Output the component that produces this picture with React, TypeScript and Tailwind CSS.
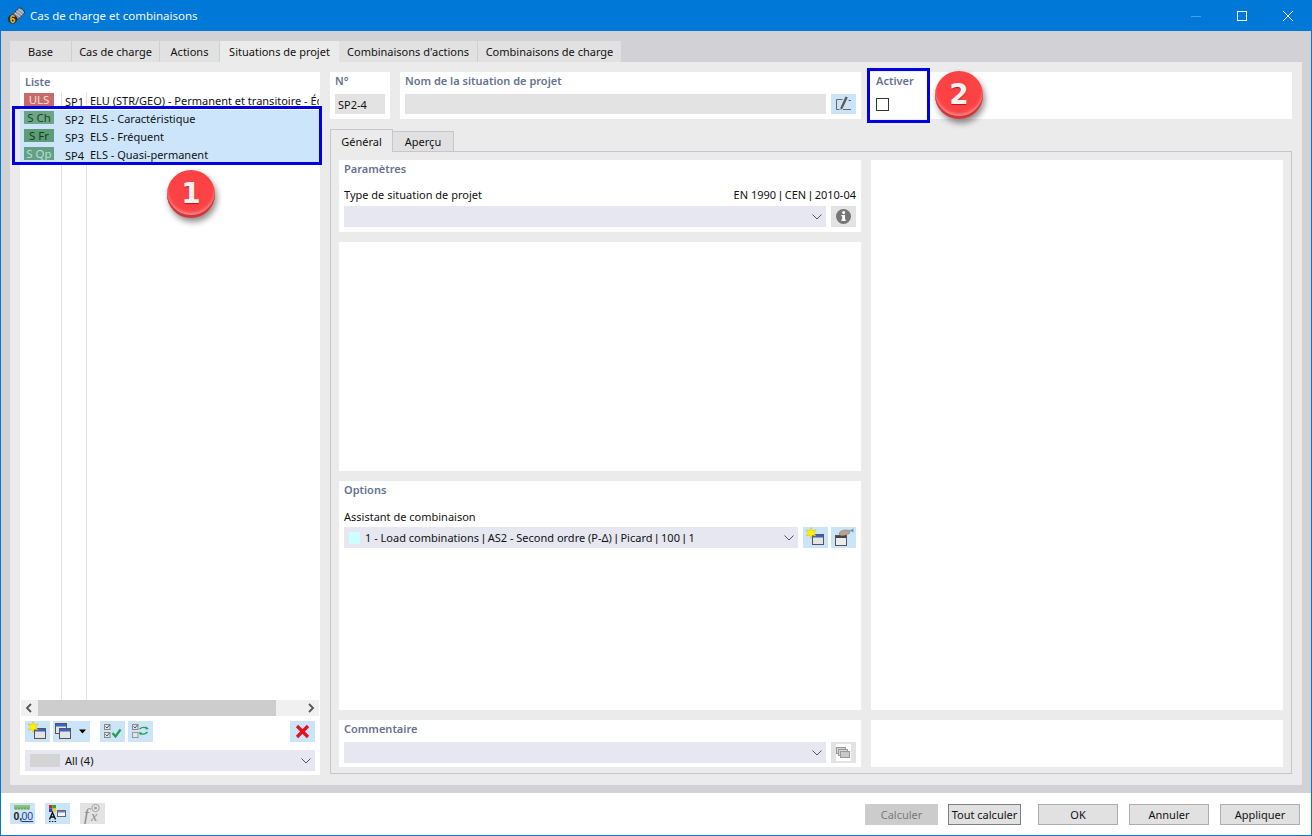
import React from "react";

const FONT = { fontFamily: '"Noto Sans", "Open Sans", sans-serif' };

function Pipe() {
  return <span className="font-['Liberation_Sans']">|</span>;
}

function Chevron() {
  return (
    <svg width="10" height="6" viewBox="0 0 10 6" className="shrink-0">
      <path d="M0.5 0.5 L5 5 L9.5 0.5" fill="none" stroke="#555" strokeWidth="1" />
    </svg>
  );
}

function Combo({ className, children }: { className: string; children?: React.ReactNode }) {
  return (
    <div className={"flex h-[21px] items-center bg-[#e6e7f0] pr-[4px] " + className}>
      <div className="flex min-w-0 flex-1 items-center">{children}</div>
      <Chevron />
    </div>
  );
}

function Btn({ children, gray, w = "w-[25px]" }: { children: React.ReactNode; gray?: boolean; w?: string }) {
  return (
    <div className={"flex h-[21px] shrink-0 items-center justify-center " + w + " " + (gray ? "bg-[#e3e3e3]" : "bg-[#cce4f7]")}>
      {children}
    </div>
  );
}

function NewWinIcon() {
  return (
    <svg width="25" height="21" viewBox="0 0 25 21">
      <rect x="9.5" y="7.5" width="11" height="10" fill="#e4e4e4" stroke="#555" />
      <rect x="10" y="8" width="10" height="2.5" fill="#3a5fd0" />
      <path d="M8 0.5 L9.3 3.8 L13 3 L10.8 6 L13 9 L9.3 8.2 L8 11.5 L6.7 8.2 L3 9 L5.2 6 L3 3 L6.7 3.8 Z" fill="#fff200" stroke="#c8b400" strokeWidth="0.4" />
    </svg>
  );
}

function DoubleWinIcon() {
  return (
    <svg width="37" height="21" viewBox="0 0 37 21">
      <rect x="2.5" y="2.5" width="11" height="10" fill="#e4e4e4" stroke="#555" />
      <rect x="3" y="3" width="10" height="2.5" fill="#3a5fd0" />
      <rect x="6.5" y="7.5" width="11" height="10" fill="#e4e4e4" stroke="#555" />
      <rect x="7" y="8" width="10" height="2.5" fill="#3a5fd0" />
      <path d="M26 8.5 H33 L29.5 12.5 Z" fill="#000" />
    </svg>
  );
}

function CheckAllIcon() {
  return (
    <svg width="25" height="21" viewBox="0 0 25 21">
      <rect x="4.5" y="3.5" width="5.5" height="5" fill="#e2e2e2" stroke="#8a8a8a" />
      <rect x="4.5" y="11.5" width="5.5" height="5" fill="#e2e2e2" stroke="#8a8a8a" />
      <path d="M5.5 5.5 L7 7 L9.5 4 M5.5 13.5 L7 15 L9.5 12" fill="none" stroke="#555" />
      <path d="M12.5 12 L15.5 15.5 L20.5 8.5" fill="none" stroke="#1ea04c" strokeWidth="2.2" />
    </svg>
  );
}

function SwapCheckIcon() {
  return (
    <svg width="25" height="21" viewBox="0 0 25 21">
      <rect x="4.5" y="3.5" width="5.5" height="5" fill="#e2e2e2" stroke="#8a8a8a" />
      <rect x="4.5" y="11.5" width="5.5" height="5" fill="#e4e4e4" stroke="#999" />
      <path d="M5.5 5.5 L7 7 L9.5 4" fill="none" stroke="#555" />
      <path d="M11.5 8 C14 6 17 6 19.5 7.5 M11.5 12 C14 13.5 17 13.5 19.5 11" fill="none" stroke="#1ea04c" strokeWidth="1.4" />
      <path d="M18 5.5 L20.8 8 L17.5 8.5 Z M13 14.2 L10.5 11.5 L13.5 11.3 Z" fill="#1ea04c" />
    </svg>
  );
}

function RedXIcon() {
  return (
    <svg width="25" height="21" viewBox="0 0 25 21">
      <path d="M7 5 L18 16 M18 5 L7 16" stroke="#e8101a" strokeWidth="3.2" />
    </svg>
  );
}

function EditIcon() {
  return (
    <svg width="25" height="20" viewBox="0 0 25 20">
      <path d="M11.5 5.5 H5.5 V15.5 H8.5 M12 15.5 H20 M17.5 6.5 H20" fill="none" stroke="#666" />
      <path d="M14.5 2.5 L16.8 3.5 L11.5 14.5 L9.7 16 L9.5 13.5 Z" fill="#5a5a5a" />
    </svg>
  );
}

function InfoIcon() {
  return (
    <svg width="25" height="21" viewBox="0 0 25 21">
      <circle cx="12.5" cy="10.5" r="7.5" fill="#767676" />
      <rect x="11.2" y="9" width="2.8" height="5.5" fill="#fff" />
      <rect x="10.3" y="13.6" width="4.6" height="1.2" fill="#fff" />
      <rect x="10.3" y="9" width="3" height="1.2" fill="#fff" />
      <circle cx="12.6" cy="6.6" r="1.5" fill="#fff" />
    </svg>
  );
}

function CopyGrayIcon() {
  return (
    <svg width="25" height="21" viewBox="0 0 25 21">
      <rect x="5" y="2" width="15" height="17" fill="#fff" />
      <rect x="5.5" y="5.5" width="9" height="6" fill="#d4d4d4" stroke="#999" />
      <rect x="7.5" y="7.5" width="9" height="6" fill="#d4d4d4" stroke="#999" />
      <rect x="9.5" y="9.5" width="9" height="6" fill="#c8c8c8" stroke="#999" />
    </svg>
  );
}

function HandWinIcon() {
  return (
    <svg width="25" height="21" viewBox="0 0 25 21">
      <rect x="4.5" y="8.5" width="11" height="10" fill="#ececec" stroke="#555" />
      <rect x="5" y="9" width="10" height="2" fill="#444" />
      <path d="M8 7 C9 3.5 12 3 15 3 L19 3.5 L18.5 6.5 L14 8 C12 9 9 9 8 7 Z" fill="#b9a28f" stroke="#85705e" strokeWidth="0.5" />
      <path d="M18.5 3.5 L22.5 1.5 V5.5 Z" fill="#5a9bd8" />
    </svg>
  );
}

function DecimalsIcon() {
  return (
    <svg width="25" height="21" viewBox="0 0 25 21">
      <rect x="4" y="2" width="16" height="4.5" fill="#8bc37a" />
      <path d="M6 4.5 V6.5 M9 4.5 V6.5 M12 4.5 V6.5 M15 4.5 V6.5 M18 4.5 V6.5" stroke="#4d8b45" />
      <text x="3.5" y="17" fontSize="10.5" fontWeight="700" fill="#222" fontFamily="Liberation Sans, sans-serif">0,</text>
      <text x="11.5" y="17" fontSize="10.5" fill="#1c3f9a" fontFamily="Liberation Sans, sans-serif" textDecoration="underline">00</text>
    </svg>
  );
}

function ColorsIcon() {
  return (
    <svg width="25" height="21" viewBox="0 0 25 21">
      <rect x="4" y="2" width="3.5" height="3.5" fill="#e02020" />
      <rect x="7.5" y="2" width="3.5" height="3.5" fill="#20b020" />
      <rect x="4" y="5.5" width="3.5" height="3.5" fill="#2040e0" />
      <rect x="7.5" y="5.5" width="3.5" height="3.5" fill="#f0d020" />
      <rect x="12.5" y="7.5" width="8" height="6" fill="#f4f4f4" stroke="#666" />
      <rect x="13" y="8" width="7" height="1.5" fill="#6a7fc0" />
      <path d="M4.5 16.5 L7.5 9.5 L10.5 16.5 M5.8 14 H9.2" fill="none" stroke="#111" strokeWidth="1.4" />
      <path d="M4 18.5 H5.5 M6.8 18.5 H8.3 M9.6 18.5 H11.1" stroke="#111" />
    </svg>
  );
}

function FxIcon() {
  return (
    <svg width="25" height="21" viewBox="0 0 25 21">
      <circle cx="15.5" cy="5" r="3.7" fill="none" stroke="#a5a5a5" />
      <circle cx="15.5" cy="5" r="1.6" fill="#a5a5a5" />
      <text x="4" y="17" fontSize="17" fontStyle="italic" fill="#8a8a8a" fontFamily="Liberation Serif, serif">f</text>
      <text x="11" y="18" fontSize="14" fontStyle="italic" fill="#8a8a8a" fontFamily="Liberation Serif, serif">x</text>
    </svg>
  );
}

function AppIcon() {
  return (
    <svg width="17" height="17" viewBox="0 0 17 17">
      <path d="M4.5 8 L10.5 1 C13 0.5 16.5 3 16.5 6 L10 12.5 Z" fill="#8d97a6" stroke="#27313f" strokeWidth="0.9" />
      <path d="M6.5 6 L12.5 10 M8.5 3.8 L14.5 8 M10.5 2 L15.8 5.8" stroke="#e2e6ec" strokeWidth="0.8" />
      <circle cx="4.6" cy="12" r="4.6" fill="#2b2b2b" />
      <text x="1.8" y="15.6" fontSize="10" fontWeight="700" fill="#f0c020" fontFamily="Liberation Sans, sans-serif">6</text>
    </svg>
  );
}

const topTabs = [
  ["Base", "w-[62px]"],
  ["Cas de charge", "w-[88px]"],
  ["Actions", "w-[60px]"],
  ["Situations de projet", "w-[119px]"],
  ["Combinaisons d'actions", "w-[139px]"],
  ["Combinaisons de charge", "w-[144px]"],
];

const rows = [
  { badge: "ULS", bg: "bg-[#c96a6a]", fg: "text-[#f3dede]", id: "SP1", name: "ELU (STR/GEO) - Permanent et transitoire - Éq. 6.10", sel: false },
  { badge: "S Ch", bg: "bg-[#6ea585]", fg: "text-[#17452f]", id: "SP2", name: "ELS - Caractéristique", sel: true },
  { badge: "S Fr", bg: "bg-[#5d9c76]", fg: "text-[#123d28]", id: "SP3", name: "ELS - Fréquent", sel: true },
  { badge: "S Qp", bg: "bg-[#64a182]", fg: "text-[#b5dcdc]", id: "SP4", name: "ELS - Quasi-permanent", sel: true },
];

const LABEL = "font-semibold text-[#66728f]";

function Marker({ n, className }: { n: string; className: string }) {
  return (
    <div
      className={
        "absolute flex h-[48px] w-[48px] items-center justify-center rounded-full bg-[#fd4245] shadow-[inset_0_-3px_0_#c93a3c,inset_0_-5px_3px_#ff8a8a,2px_4px_6px_rgba(0,0,0,0.45)] " +
        className
      }
    >
      <span
        className="text-[28px] font-bold leading-none text-[#f6f0f0] [text-shadow:0_1px_1px_rgba(120,0,0,0.6)]"
        style={{ fontFamily: '"DejaVu Sans", sans-serif' }}
      >
        {n}
      </span>
    </div>
  );
}

export default function App() {
  return (
    <div
      className="relative flex h-[836px] w-[1312px] flex-col overflow-hidden border-x border-b border-[#0078d7] bg-white text-[11px] leading-none text-[#111]"
      style={FONT}
    >
      {/* title bar */}
      <div className="flex h-[31px] shrink-0 items-center bg-[#0078d7] pl-[7px] pr-[17px] text-[#f2f8fd]">
        <AppIcon />
        <span className="ml-[5px] flex-1 text-[11.5px]">Cas de charge et combinaisons</span>
        <svg width="12" height="12" viewBox="0 0 12 12" className="mr-[34px]">
          <path d="M1 6.5 H11" stroke="#4d9fe3" />
        </svg>
        <svg width="12" height="12" viewBox="0 0 12 12" className="mr-[34px]">
          <rect x="1.5" y="1.5" width="9" height="9" fill="none" stroke="#fff" />
        </svg>
        <svg width="12" height="12" viewBox="0 0 12 12">
          <path d="M1 1 L11 11 M11 1 L1 11" stroke="#fff" />
        </svg>
      </div>

      {/* main */}
      <div className="flex h-[762px] shrink-0 flex-col bg-[#d2d1d5] px-[9px] pb-[8px] pt-[10px]">
        <div className="flex h-[21px] shrink-0">
          {topTabs.map(([t, w], i) => (
            <div
              key={t}
              className={
                "flex shrink-0 items-center justify-center " +
                w +
                " " +
                (i === 3 ? "bg-[#ebebeb]" : "border-r border-[#d0d0d0] bg-[#e1e1e1]")
              }
            >
              {t}
            </div>
          ))}
        </div>

        <div className="flex min-h-0 flex-1 gap-[10px] bg-[#ebebeb] p-[10px]">
          {/* left list */}
          <div className="flex h-[703px] w-[300px] shrink-0 flex-col bg-white">
            <div className={"h-[20px] shrink-0 pl-[5px] pt-[4px] " + LABEL}>Liste</div>
            <div className="flex min-h-0 flex-1 flex-col">
              {rows.map((r) => (
                <div key={r.id} className={"flex h-[18px] shrink-0 " + (r.sel ? "bg-[#cce5fb]" : "")}>
                  <div className="w-[42px] shrink-0 border-r border-[#e2e2e2] pl-[4px] pt-[1px]">
                    <div className={"flex h-[13px] w-[30px] items-center justify-center text-[11.5px] " + r.bg + " " + r.fg}>{r.badge}</div>
                  </div>
                  <div className="flex w-[25px] shrink-0 items-center border-r border-[#e2e2e2] pl-[3px]">{r.id}</div>
                  <div className="mr-[1px] min-w-0 flex-1 overflow-hidden whitespace-nowrap pl-[3px] leading-[18px]">{r.name}</div>
                </div>
              ))}
              <div className="flex min-h-0 flex-1">
                <div className="w-[42px] shrink-0 border-r border-[#e2e2e2]" />
                <div className="w-[25px] shrink-0 border-r border-[#e2e2e2]" />
              </div>
            </div>
            <div className="mx-[1px] flex h-[16px] shrink-0 items-center bg-[#f0f0f0]">
              <svg width="17" height="16" viewBox="0 0 17 16" className="shrink-0">
                <path d="M10 4 L6 8 L10 12" fill="none" stroke="#555" strokeWidth="1.8" />
              </svg>
              <div className="h-full w-[238px] bg-[#cdcdcd]" />
              <div className="flex-1" />
              <svg width="17" height="16" viewBox="0 0 17 16" className="shrink-0">
                <path d="M7 4 L11 8 L7 12" fill="none" stroke="#555" strokeWidth="1.8" />
              </svg>
            </div>
            <div className="mt-[5px] flex shrink-0 px-[5px]">
              <Btn><NewWinIcon /></Btn>
              <div className="ml-[3px]">
                <Btn w="w-[37px]"><DoubleWinIcon /></Btn>
              </div>
              <div className="ml-[10px]">
                <Btn><CheckAllIcon /></Btn>
              </div>
              <div className="ml-[3px]">
                <Btn><SwapCheckIcon /></Btn>
              </div>
              <div className="flex-1" />
              <Btn><RedXIcon /></Btn>
            </div>
            <div className="mb-[4px] mt-[8px] px-[5px]">
              <Combo className="w-[290px] pl-[5px]">
                <div className="h-[13px] w-[30px] shrink-0 bg-[#d4d4d4]" />
                <span className="ml-[5px]">All (4)</span>
              </Combo>
            </div>
          </div>

          {/* right column */}
          <div className="flex w-[962px] shrink-0 flex-col">
            <div className="flex h-[47px] shrink-0">
              <div className="flex w-[60px] flex-col bg-white px-[5px]">
                <div className={"mt-[1px] h-[21px] leading-[16px] " + LABEL}>N°</div>
                <div className="flex h-[20px] items-center bg-[#e3e3e3] pl-[3px]">SP2-4</div>
              </div>
              <div className="ml-[10px] flex w-[461px] flex-col bg-white px-[5px]">
                <div className={"mt-[1px] h-[21px] leading-[16px] " + LABEL}>Nom de la situation de projet</div>
                <div className="flex gap-[5px]">
                  <div className="h-[20px] flex-1 bg-[#e3e3e3]" />
                  <div className="flex h-[20px] w-[25px] items-center justify-center bg-[#cce4f7]">
                    <EditIcon />
                  </div>
                </div>
              </div>
              <div className="ml-[9px] flex flex-1 flex-col bg-white pl-[6px]">
                <div className={"mt-[1px] h-[25px] leading-[16px] " + LABEL}>Activer</div>
                <div className="h-[13px] w-[13px] border border-[#333] bg-white" />
              </div>
            </div>

            {/* sub tabs */}
            <div className="mt-[10px] flex h-[22px] shrink-0 items-end">
              <div className="z-10 -mb-[1px] flex h-[23px] w-[63px] items-center justify-center border border-b-0 border-[#c6c6ce] bg-[#ebebeb]">
                Général
              </div>
              <div className="flex h-[20px] w-[61px] items-center justify-center border border-b-0 border-l-0 border-[#c6c6ce] bg-[#e1e1e1]">
                Aperçu
              </div>
            </div>

            <div className="flex h-[623px] shrink-0 gap-[10px] border border-[#c6c6ce] px-[8px] pb-[6px] pt-[8px]">
              <div className="flex w-[522px] shrink-0 flex-col gap-[10px]">
                <div className="flex h-[72px] shrink-0 flex-col bg-white px-[5px]">
                  <div className={"mt-[2px] h-[21px] leading-[14px] " + LABEL}>Paramètres</div>
                  <div className="flex h-[23px] items-center justify-between">
                    <span>Type de situation de projet</span>
                    <span>EN 1990 <Pipe /> CEN <Pipe /> 2010-04</span>
                  </div>
                  <div className="flex gap-[5px]">
                    <Combo className="w-[482px]" />
                    <Btn gray><InfoIcon /></Btn>
                  </div>
                </div>
                <div className="h-[229px] shrink-0 bg-white" />
                <div className="flex h-[229px] shrink-0 flex-col bg-white px-[5px]">
                  <div className={"mt-[2px] h-[22px] leading-[13px] " + LABEL}>Options</div>
                  <div className="flex h-[22px] items-center">Assistant de combinaison</div>
                  <div className="flex">
                    <Combo className="w-[454px] pl-[5px]">
                      <div className="h-[12px] w-[11px] shrink-0 bg-[#ccffff]" />
                      <span className="ml-[5px]">1 - Load combinations <Pipe /> AS2 - Second ordre (P-Δ) <Pipe /> Picard <Pipe /> 100 <Pipe /> 1</span>
                    </Combo>
                    <div className="ml-[5px]"><Btn><NewWinIcon /></Btn></div>
                    <div className="ml-[3px]"><Btn><HandWinIcon /></Btn></div>
                  </div>
                </div>
                <div className="flex h-[47px] shrink-0 flex-col bg-white px-[5px]">
                  <div className={"mt-[2px] h-[20px] leading-[13px] " + LABEL}>Commentaire</div>
                  <div className="flex gap-[5px]">
                    <Combo className="w-[482px]" />
                    <Btn gray><CopyGrayIcon /></Btn>
                  </div>
                </div>
              </div>
              <div className="flex w-[412px] shrink-0 flex-col gap-[10px]">
                <div className="h-[550px] bg-white" />
                <div className="h-[47px] bg-white" />
              </div>
            </div>
          </div>
        </div>
      </div>

      {/* footer */}
      <div className="flex flex-1 items-start bg-white pl-[9px] pr-[11px] pt-[10px]">
        <div className="flex gap-[10px]">
          <Btn><DecimalsIcon /></Btn>
          <Btn><ColorsIcon /></Btn>
          <Btn gray><FxIcon /></Btn>
        </div>
        <div className="flex-1" />
        <div className="mt-[1px] flex">
          <div className="flex h-[21px] w-[73px] items-center justify-center bg-[#cccccc] text-[#7a7a7a]">Calculer</div>
          <div className="ml-[10px] flex h-[21px] w-[73px] items-center justify-center border border-[#808080] bg-[#e1e1e1]">Tout calculer</div>
          <div className="ml-[17px] flex h-[21px] w-[80px] items-center justify-center border border-[#adadad] bg-[#e1e1e1]">OK</div>
          <div className="ml-[11px] flex h-[21px] w-[80px] items-center justify-center border border-[#adadad] bg-[#e1e1e1]">Annuler</div>
          <div className="ml-[11px] flex h-[21px] w-[80px] items-center justify-center border border-[#adadad] bg-[#e1e1e1]">Appliquer</div>
        </div>
      </div>

      {/* annotation overlays */}
      <div className="absolute left-[11px] top-[106px] h-[59px] w-[310px] border-[3px] border-[#0000e1]" />
      <div className="absolute left-[866px] top-[68px] h-[55px] w-[63px] border-[3px] border-[#0000e1]" />
      <Marker n="1" className="left-[166px] top-[170px]" />
      <Marker n="2" className="left-[934px] top-[71px]" />
    </div>
  );
}
